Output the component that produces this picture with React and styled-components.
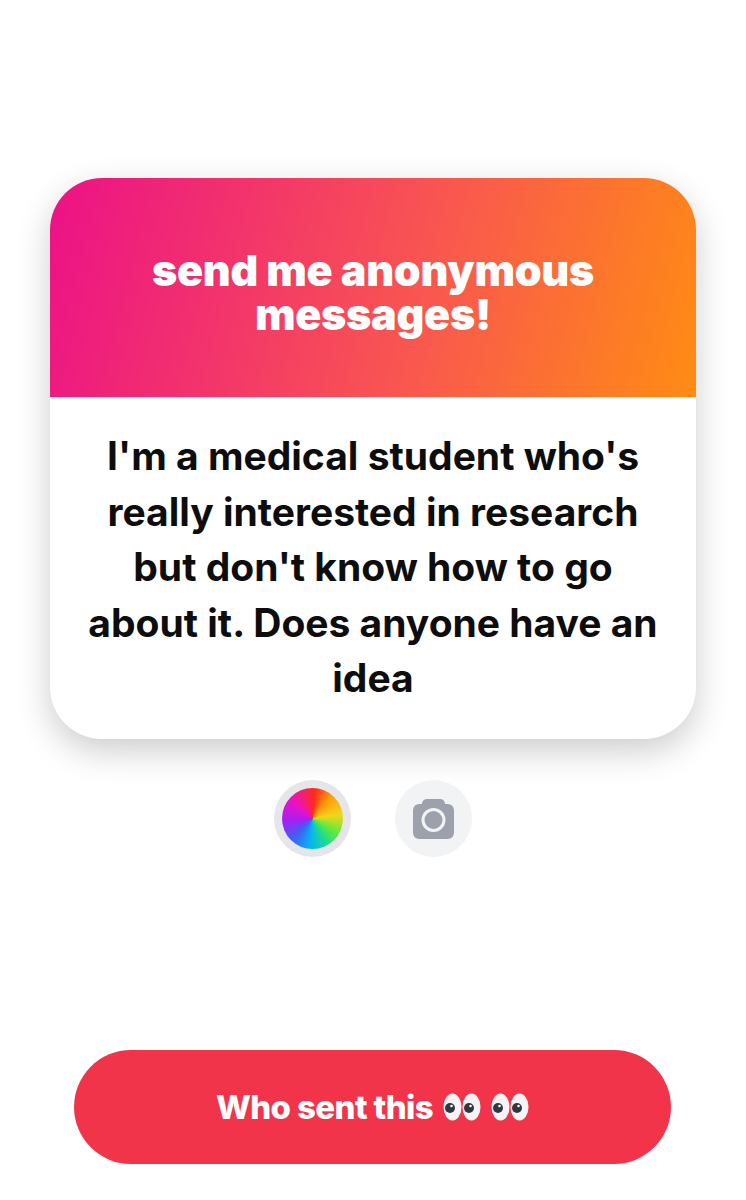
import React from 'react';
import styled, { createGlobalStyle } from 'styled-components';

const GlobalStyle = createGlobalStyle`
  html, body {
    margin: 0;
    padding: 0;
    background: #fff;
  }
  * {
    box-sizing: border-box;
  }
`;

const Page = styled.div`
  width: 746px;
  height: 1200px;
  display: flex;
  flex-direction: column;
  align-items: center;
  padding-top: 178px;
  font-family: Inter, "Liberation Sans", sans-serif;
  overflow: hidden;
`;

const Card = styled.div`
  width: 646px;
  height: 561px;
  border-radius: 52px;
  background: #fff;
  box-shadow: 0 12px 34px rgba(0, 0, 0, 0.2);
  overflow: hidden;
`;

const CardHeader = styled.div`
  height: 219px;
  display: flex;
  align-items: center;
  justify-content: center;
  padding-top: 9px;
  background: linear-gradient(104deg, #ec1187 0%, #f9574f 58%, #ff8c13 100%);
`;

const Title = styled.h1`
  margin: 0;
  width: 520px;
  color: #fff;
  font-size: 43px;
  font-weight: 900;
  line-height: 44px;
  letter-spacing: -0.25px;
  text-align: center;
`;

const Question = styled.p`
  margin: 0;
  padding: 31px 32px 0;
  color: #0d0d0d;
  font-size: 39px;
  font-weight: 700;
  line-height: 55.5px;
  letter-spacing: 0;
  text-align: center;
`;

const Tools = styled.div`
  display: flex;
  gap: 44px;
  margin-top: 41px;
  margin-left: -1px;
`;

const ToolButton = styled.div`
  width: 77px;
  height: 77px;
  border-radius: 50%;
  display: flex;
  align-items: center;
  justify-content: center;
  background: ${(p) => (p.$active ? '#e5e6e9' : '#f2f3f5')};
`;

const ColorWheel = styled.div`
  width: 61px;
  height: 61px;
  border-radius: 50%;
  background: conic-gradient(
    #ff2a1e 5deg,
    #ff9a08 38deg,
    #f0d61c 82deg,
    #62ea3c 120deg,
    #1edc8c 150deg,
    #06b3f2 185deg,
    #3b62f5 222deg,
    #a61ff0 265deg,
    #e812c8 310deg,
    #ff2a1e 365deg
  );
`;

const SendButton = styled.div`
  width: 597px;
  height: 114px;
  margin-top: 193px;
  margin-left: -1px;
  border-radius: 57px;
  background: #f2344b;
  display: flex;
  align-items: center;
  justify-content: center;
  gap: 10px;
  color: #fff;
  font-size: 33px;
  font-weight: 800;
  letter-spacing: -0.6px;
`;

const Eyes = styled.svg`
  width: 38px;
  height: 30px;
  flex: none;
`;

const EyePair = () => (
  <Eyes viewBox="0 0 38 30">
    <ellipse cx="9.5" cy="15" rx="9" ry="13.500" fill="#f4f4f6" />
    <ellipse cx="28.5" cy="15" rx="9" ry="13.500" fill="#f4f4f6" />
    <circle cx="7" cy="16" r="5" fill="#33373d" />
    <circle cx="26" cy="16" r="5" fill="#33373d" />
    <circle cx="8.500" cy="14" r="1.300" fill="#fff" />
    <circle cx="27.500" cy="14" r="1.300" fill="#fff" />
  </Eyes>
);

const CameraIcon = () => (
  <svg width="41" height="40" viewBox="0 0 41 40">
    <path
      fill="#9ca1ab"
      d="M14 0h13c2.800 0 4.600 1.600 5.200 5h2.300C38.200 5 41 7.800 41 11.500V33.500C41 37.200 38.200 40 34.500 40h-28C2.800 40 0 37.200 0 33.500V11.500C0 7.800 2.800 5 6.500 5h2.300C9.400 1.600 11.200 0 14 0z"
    />
    <circle cx="20.500" cy="21" r="10.500" fill="none" stroke="#f2f3f5" strokeWidth="3" />
  </svg>
);

export default function App() {
  return (
    <>
      <GlobalStyle />
      <Page>
        <Card>
          <CardHeader>
            <Title>send me anonymous messages!</Title>
          </CardHeader>
          <Question>
            I'm a medical student who's really interested in research but don't know how to go about it. Does anyone have an idea
          </Question>
        </Card>
        <Tools>
          <ToolButton $active>
            <ColorWheel />
          </ToolButton>
          <ToolButton>
            <CameraIcon />
          </ToolButton>
        </Tools>
        <SendButton>
          <span>Who sent this</span>
          <EyePair />
          <EyePair />
        </SendButton>
      </Page>
    </>
  );
}
